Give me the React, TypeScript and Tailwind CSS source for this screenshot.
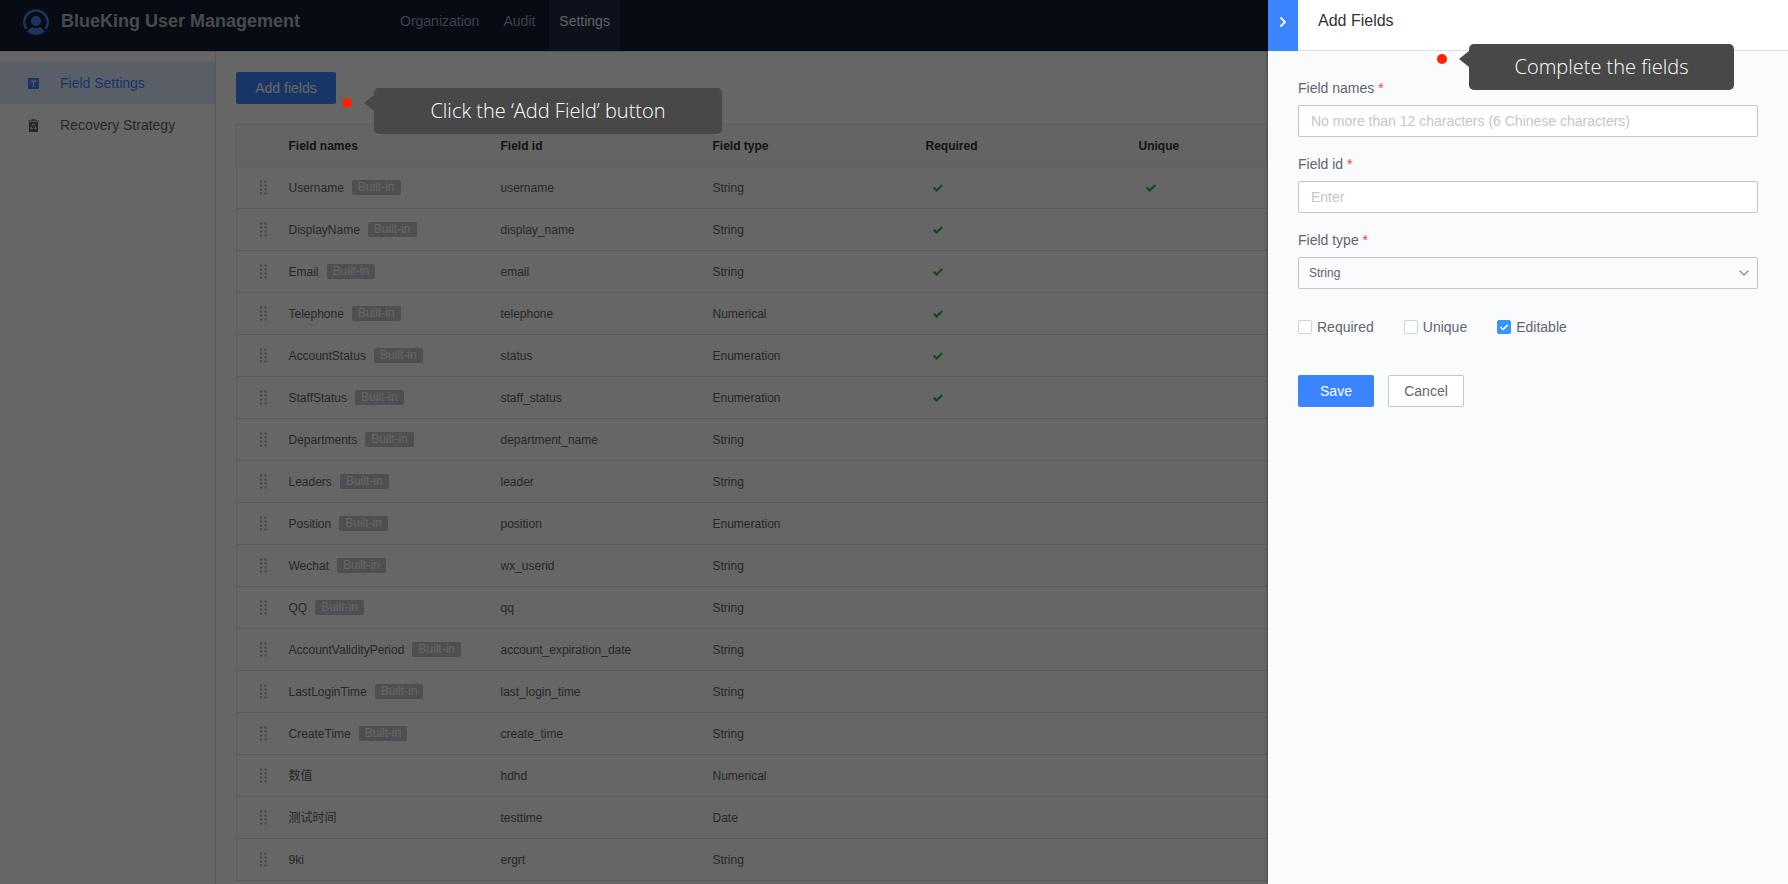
import { useState } from "react";

type Field = { name: string; builtIn?: boolean; id: string; type: string; required?: boolean; unique?: boolean };

const fields: Field[] = [
  { name: "Username", builtIn: true, id: "username", type: "String", required: true, unique: true },
  { name: "DisplayName", builtIn: true, id: "display_name", type: "String", required: true },
  { name: "Email", builtIn: true, id: "email", type: "String", required: true },
  { name: "Telephone", builtIn: true, id: "telephone", type: "Numerical", required: true },
  { name: "AccountStatus", builtIn: true, id: "status", type: "Enumeration", required: true },
  { name: "StaffStatus", builtIn: true, id: "staff_status", type: "Enumeration", required: true },
  { name: "Departments", builtIn: true, id: "department_name", type: "String" },
  { name: "Leaders", builtIn: true, id: "leader", type: "String" },
  { name: "Position", builtIn: true, id: "position", type: "Enumeration" },
  { name: "Wechat", builtIn: true, id: "wx_userid", type: "String" },
  { name: "QQ", builtIn: true, id: "qq", type: "String" },
  { name: "AccountValidityPeriod", builtIn: true, id: "account_expiration_date", type: "String" },
  { name: "LastLoginTime", builtIn: true, id: "last_login_time", type: "String" },
  { name: "CreateTime", builtIn: true, id: "create_time", type: "String" },
  { name: "数值", id: "hdhd", type: "Numerical" },
  { name: "测试时间", id: "testtime", type: "Date" },
  { name: "9ki", id: "ergrt", type: "String" },
];

function Logo() {
  return (
    <svg viewBox="0 0 26 26" className="size-[26px] text-[#4485ef]" aria-hidden="true">
      <path d="M3.400 20A11.800 11.800 0 1 1 22.600 20" fill="none" stroke="currentColor" strokeWidth="2.400" />
      <circle cx="13" cy="12" r="5" fill="currentColor" />
      <path d="M4.200 22.800c1.400-2.700 3-4.200 5-4.600 1 .6 2.300.9 3.800.9s2.800-.3 3.800-.9c2 .4 3.600 1.900 5 4.600A13 13 0 0 1 13 26a13 13 0 0 1-8.800-3.200z" fill="currentColor" />
    </svg>
  );
}

function FieldIcon() {
  return (
    <svg viewBox="0 0 11 11" className="size-[11px]" aria-hidden="true">
      <rect width="11" height="11" rx="0.500" fill="currentColor" />
      <path d="M2.700 2.500h5.600v1.800h-.7l-.3-.9H6.100v4.300l.8.300v.5H4.100V8l.8-.3V3.400H3.700l-.3.9h-.7z" fill="#e1ecff" />
    </svg>
  );
}

function BinIcon() {
  return (
    <svg viewBox="0 0 11 13" className="h-[13px] w-[11px]" aria-hidden="true">
      <path d="M3.500 0h4v1.200H11v1.400H0V1.200h3.500z" fill="currentColor" opacity="0.800" />
      <path d="M.9 3h9.200v9.200a.8.800 0 0 1-.8.800H1.700a.8.800 0 0 1-.8-.8z" fill="currentColor" />
      <path d="M4.300 6.500 5.500 4.700l1.200 1.800M7.400 7.600l.8 1.900H6.200M4.800 9.500h-2l.9-1.900" fill="none" stroke="#fff" strokeWidth="0.900" />
    </svg>
  );
}

function Grip() {
  return (
    <svg viewBox="0 0 7 15" className="h-[15px] w-[7px] text-[#a6a9b2]" aria-hidden="true">
      {[0, 4, 8, 12].map((y) => (
        <g key={y} fill="currentColor">
          <rect x="0" y={y + 0.5} width="2" height="2" />
          <rect x="4.500" y={y + 0.5} width="2" height="2" />
        </g>
      ))}
    </svg>
  );
}

function Tick() {
  return (
    <svg viewBox="0 0 10 8" className="ml-[7px] h-2 w-2.5" role="img" aria-label="Yes">
      <path d="M.8 3.700 3.700 6.500 9.200 1" fill="none" stroke="#2dba55" strokeWidth="2.300" />
    </svg>
  );
}

function Callout({ children }: { children: string }) {
  return (
    <>
      <span className="size-2.5 rounded-full bg-[#ff2200]" />
      <svg viewBox="0 0 10 16" className="ml-3 h-4 w-2.5" aria-hidden="true">
        <path d="M0 8 10 0v16z" fill="#484848" />
      </svg>
      <span className="mt-4 grow rounded-[5px] bg-[#484848] text-center font-['Open_Sans',sans-serif] text-xl leading-[46px] font-light text-white">
        {children}
      </span>
    </>
  );
}

function Label({ htmlFor, children }: { htmlFor: string; children: string }) {
  return (
    <label htmlFor={htmlFor} className="mb-[7px] block text-sm leading-5 text-[#63656e]">
      {children} <span className="text-[#ff3b30]">*</span>
    </label>
  );
}

function Check({ label, initial = false }: { label: string; initial?: boolean }) {
  const [on, setOn] = useState(initial);
  return (
    <label className="flex items-center gap-[5px] text-sm leading-5 text-[#63656e]">
      <span className="grid">
        <input
          type="checkbox"
          checked={on}
          onChange={() => setOn(!on)}
          className="col-start-1 row-start-1 size-3.5 appearance-none rounded-xs border border-[#c9d3e4] bg-white checked:border-[#3a94ff] checked:bg-[#3a94ff]"
        />
        {on && (
          <svg viewBox="0 0 14 14" className="pointer-events-none col-start-1 row-start-1 size-3.5" aria-hidden="true">
            <path d="m3.500 7 2.600 2.500 4.600-4.600" fill="none" stroke="#fff" strokeWidth="1.600" />
          </svg>
        )}
      </span>
      {label}
    </label>
  );
}

const control = "h-8 w-full rounded-xs border border-[#c4c6cc] text-[#63656e] outline-none";

export default function App() {
  return (
    <div className="relative flex h-screen flex-col overflow-hidden bg-white font-['Liberation_Sans','Noto_Sans_CJK_SC',sans-serif] text-sm text-[#63656e]">
      <header className="flex h-[52px] shrink-0 border-b border-[#dcdee5] bg-[#121e34] pl-[23px]">
        <div className="flex h-11 items-center gap-3">
          <Logo />
          <h1 className="w-[323px] pb-0.5 text-lg font-bold text-[#b4b8c0]">BlueKing User Management</h1>
        </div>
        <nav className="flex leading-[42px] text-[#96a2b9]">
          <a href="#organization" className="px-4">Organization</a>
          <a href="#audit" className="px-2">Audit</a>
          <a href="#settings" className="ml-1.5 bg-[#212b45] px-2.5 text-[#eceff5]">Settings</a>
        </nav>
      </header>

      <div className="flex min-h-0 grow">
        <aside className="w-[216px] shrink-0 border-r border-[#dcdee5] pt-2.5">
          <a href="#fields" className="flex h-[42px] items-center gap-[21px] bg-[#e1ecff] pl-7 text-[#3a84ff]">
            <FieldIcon />
            <span>Field Settings</span>
          </a>
          <a href="#recovery" className="flex h-[42px] items-center gap-[21px] pl-7">
            <BinIcon />
            <span>Recovery Strategy</span>
          </a>
        </aside>

        <main className="min-w-0 grow overflow-hidden pt-5 pl-5">
          <button type="button" className="block h-8 w-[100px] rounded-xs bg-[#3a84ff] text-white">Add fields</button>
          <table className="mt-5 w-full table-fixed border-collapse border border-[#e3e5ea] text-left text-xs">
            <colgroup>
              <col className="w-[52px]" />
              <col className="w-[212px]" />
              <col className="w-[212px]" />
              <col className="w-[213px]" />
              <col className="w-[213px]" />
              <col />
            </colgroup>
            <thead className="bg-[#fafbfd] text-[#313238]">
              <tr className="h-[42px] border-b border-[#e3e5ea]">
                <th aria-label="Order" />
                <th>Field names</th>
                <th>Field id</th>
                <th>Field type</th>
                <th>Required</th>
                <th>Unique</th>
              </tr>
            </thead>
            <tbody>
              {fields.map((f) => (
                <tr key={f.id} className="h-[42px] border-b border-[#e3e5ea]">
                  <td className="pl-[23px]"><Grip /></td>
                  <td>
                    <span className="flex items-center gap-2">
                      {f.name}
                      {f.builtIn && <span className="rounded-xs bg-[#c4c6cc] px-1.5 leading-[15px] text-white">Built-in</span>}
                    </span>
                  </td>
                  <td>{f.id}</td>
                  <td>{f.type}</td>
                  <td>{f.required && <Tick />}</td>
                  <td>{f.unique && <Tick />}</td>
                </tr>
              ))}
            </tbody>
          </table>
        </main>
      </div>

      <div className="absolute inset-0 bg-black/60" />

      <section aria-label="Add Fields" className="absolute inset-y-0 right-0 w-[520px] bg-[#fafbfd] shadow-[0_0_3px_rgba(0,0,0,0.5)]">
        <div className="flex h-[51px] border-b border-[#dcdee5] bg-white">
          <button type="button" aria-label="Close" className="flex h-[51px] w-[30px] items-center justify-center bg-[#3a84ff] pb-[7px]">
            <svg viewBox="0 0 8 12" className="h-3 w-2" aria-hidden="true">
              <path d="m1.500 1.500 4.500 4.500-4.500 4.500" fill="none" stroke="#fff" strokeWidth="1.800" />
            </svg>
          </button>
          <h2 className="pl-5 text-base leading-[42px] text-[#313238]">Add Fields</h2>
        </div>
        <form className="px-[30px] pt-[27px]" onSubmit={(e) => e.preventDefault()}>
          <div className="mb-[17px]">
            <Label htmlFor="name">Field names</Label>
            <input id="name" placeholder="No more than 12 characters (6 Chinese characters)" className={`${control} bg-white px-3 placeholder:text-[#c4c6cc]`} />
          </div>
          <div className="mb-[17px]">
            <Label htmlFor="fid">Field id</Label>
            <input id="fid" placeholder="Enter" className={`${control} bg-white px-3 placeholder:text-[#c4c6cc]`} />
          </div>
          <Label htmlFor="ftype">Field type</Label>
          <div className="grid items-center">
            <select id="ftype" defaultValue="String" className={`${control} col-start-1 row-start-1 appearance-none bg-transparent px-2.5 text-xs`}>
              <option>String</option>
              <option>Numerical</option>
              <option>Enumeration</option>
              <option>Date</option>
            </select>
            <svg viewBox="0 0 10 6" className="pointer-events-none col-start-1 row-start-1 mr-[9px] h-1.5 w-2.5 justify-self-end" aria-hidden="true">
              <path d="m.6.6 4.400 4.400L9.400.6" fill="none" stroke="#979ba5" strokeWidth="1.500" />
            </svg>
          </div>
          <div className="mt-7 flex gap-[30px]">
            <Check label="Required" />
            <Check label="Unique" />
            <Check label="Editable" initial />
          </div>
          <div className="mt-[38px] flex gap-3.5">
            <button type="submit" className="h-8 w-[76px] rounded-xs bg-[#3a84ff] text-white">Save</button>
            <button type="button" className="h-8 w-[76px] rounded-xs border border-[#c4c6cc] bg-white">Cancel</button>
          </div>
        </form>
      </section>

      <div className="absolute top-[72px] left-[342px] flex w-[380px] items-center">
        <Callout>Click the ‘Add Field’ button</Callout>
      </div>
      <div className="absolute top-[28px] right-[54px] flex w-[297px] items-center">
        <Callout>Complete the fields</Callout>
      </div>
    </div>
  );
}
